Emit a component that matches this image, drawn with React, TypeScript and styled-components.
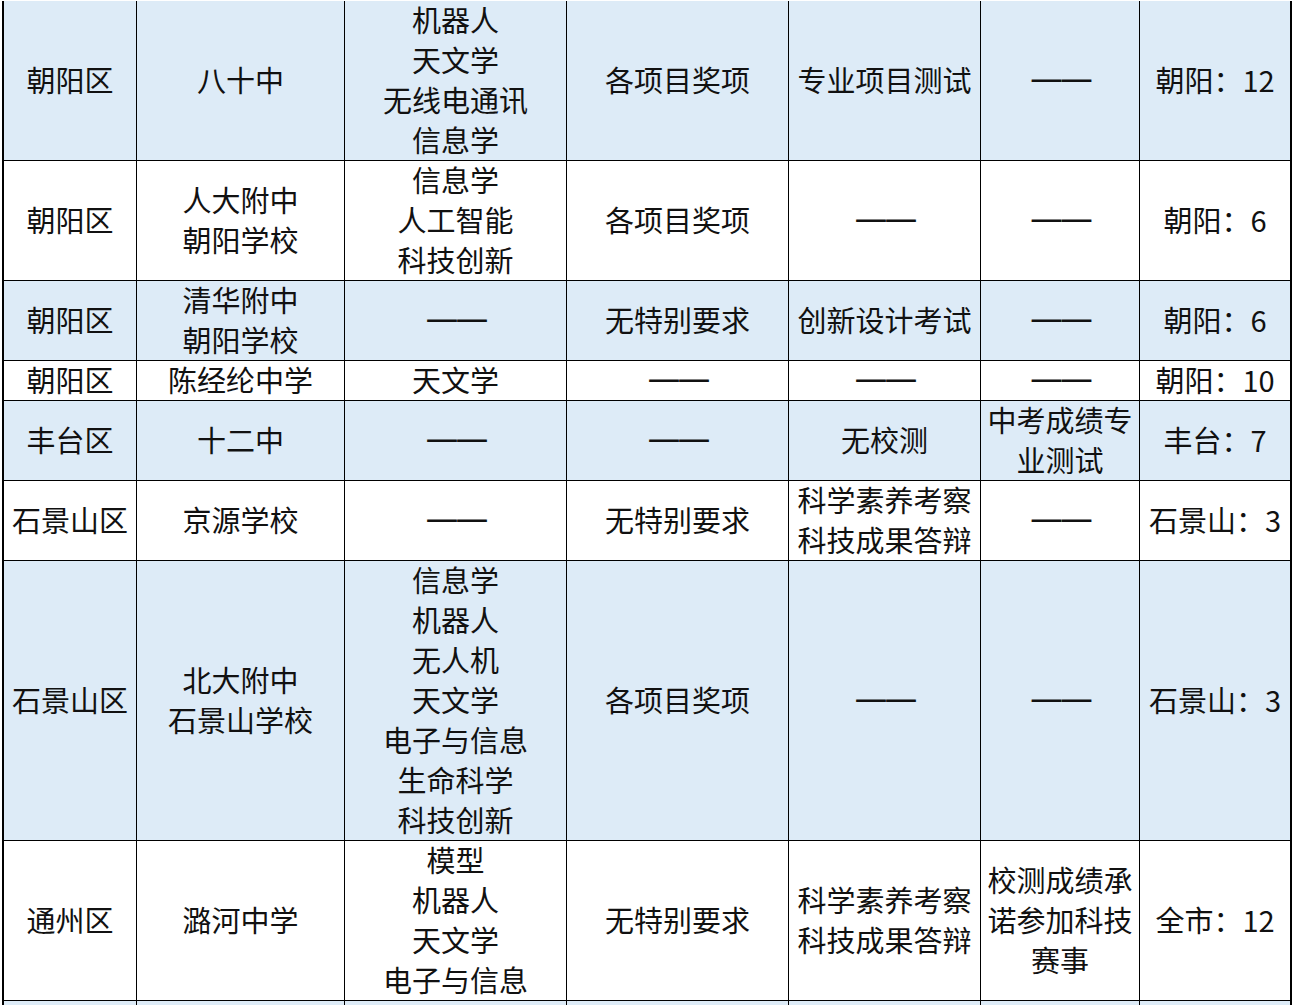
import React from "react";
import styled, { createGlobalStyle } from "styled-components";

const GlobalStyle = createGlobalStyle`
  html, body {
    margin: 0;
    padding: 0;
    background: #ffffff;
    overflow: hidden;
  }
  body {
    font-family: "Noto Sans CJK SC", "Microsoft YaHei", sans-serif;
    color: #111111;
  }
`;

const COLUMNS = "133px 208px 222px 222px 192px 159px 152px";

export const TableWrapper = styled.div`
  display: flex;
  flex-direction: column;
  margin: 1px 0 0 2px;
  width: 1290px;
`;

export const Row = styled.div<{ $shade: boolean; $lines: number }>`
  display: grid;
  grid-template-columns: ${COLUMNS};
  grid-template-rows: 100%;
  height: ${({ $lines }) => $lines * 40}px;
  background: ${({ $shade }) => ($shade ? "#ddebf7" : "#ffffff")};
  border-left: 2px solid #000;
  box-sizing: border-box;
  flex-shrink: 0;
`;

export const Cell = styled.div`
  display: flex;
  align-items: center;
  justify-content: center;
  box-sizing: border-box;
  min-height: 0;
  border-right: 1px solid #000;
  border-bottom: 1px solid #000;
  font-size: 29px;
  line-height: 40px;
  text-align: center;
  white-space: pre-line;

  &:last-child {
    border-right-width: 2px;
  }
`;

export const CellText = styled.span`
  display: block;
  margin-top: -4px;
`;

export const Dash = styled.span`
  display: block;
  margin-top: -4px;
  font-family: "DejaVu Sans", sans-serif;
  font-size: 33px;
  letter-spacing: -3px;
  color: #111111;
`;

type RowData = {
  lines: number;
  cells: string[];
};

const DASH = "——";

const rows: RowData[] = [
  {
    lines: 4,
    cells: ["朝阳区", "八十中", "机器人\n天文学\n无线电通讯\n信息学", "各项目奖项", "专业项目测试", DASH, "朝阳：12"],
  },
  {
    lines: 3,
    cells: ["朝阳区", "人大附中\n朝阳学校", "信息学\n人工智能\n科技创新", "各项目奖项", DASH, DASH, "朝阳：6"],
  },
  {
    lines: 2,
    cells: ["朝阳区", "清华附中\n朝阳学校", DASH, "无特别要求", "创新设计考试", DASH, "朝阳：6"],
  },
  {
    lines: 1,
    cells: ["朝阳区", "陈经纶中学", "天文学", DASH, DASH, DASH, "朝阳：10"],
  },
  {
    lines: 2,
    cells: ["丰台区", "十二中", DASH, DASH, "无校测", "中考成绩专\n业测试", "丰台：7"],
  },
  {
    lines: 2,
    cells: ["石景山区", "京源学校", DASH, "无特别要求", "科学素养考察\n科技成果答辩", DASH, "石景山：3"],
  },
  {
    lines: 7,
    cells: [
      "石景山区",
      "北大附中\n石景山学校",
      "信息学\n机器人\n无人机\n天文学\n电子与信息\n生命科学\n科技创新",
      "各项目奖项",
      DASH,
      DASH,
      "石景山：3",
    ],
  },
  {
    lines: 4,
    cells: [
      "通州区",
      "潞河中学",
      "模型\n机器人\n天文学\n电子与信息",
      "无特别要求",
      "科学素养考察\n科技成果答辩",
      "校测成绩承\n诺参加科技\n赛事",
      "全市：12",
    ],
  },
  {
    lines: 1,
    cells: ["", "", "", "", "", "", ""],
  },
];

const App = () => {
  return (
    <>
      <GlobalStyle />
      <TableWrapper>
        {rows.map((row, i) => (
          <Row key={i} $shade={i % 2 === 0} $lines={row.lines}>
            {row.cells.map((text, j) => (
              <Cell key={j}>
                {text === DASH ? <Dash>{text}</Dash> : <CellText>{text}</CellText>}
              </Cell>
            ))}
          </Row>
        ))}
      </TableWrapper>
    </>
  );
};

export default App;
